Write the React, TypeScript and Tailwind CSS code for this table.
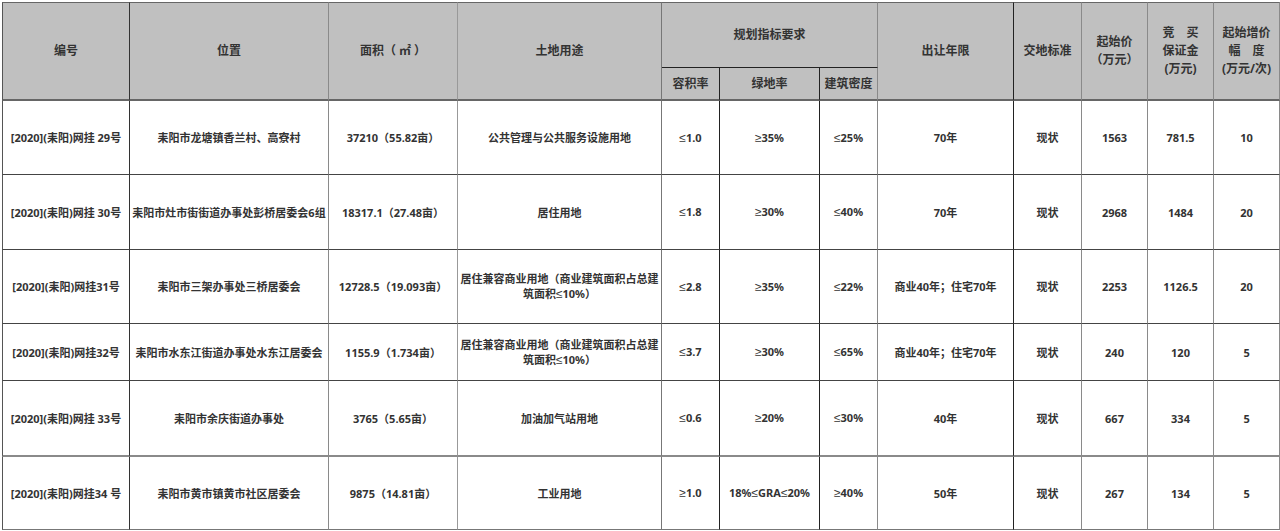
import React from "react";

type Row = {
  id: string;
  loc: string;
  area: string;
  use: string[];
  far: string;
  green: string;
  density: string;
  term: string;
  std: string;
  price: string;
  deposit: string;
  step: string;
  h: string;
  bottom: string;
};

const rows: Row[] = [
  {
    id: "[2020](耒阳)网挂 29号",
    loc: "耒阳市龙塘镇香兰村、高寮村",
    area: "37210（55.82亩）",
    use: ["公共管理与公共服务设施用地"],
    far: "≤1.0",
    green: "≥35%",
    density: "≤25%",
    term: "70年",
    std: "现状",
    price: "1563",
    deposit: "781.5",
    step: "10",
    h: "h-[74px]",
    bottom: "border-b border-b-[#444]",
  },
  {
    id: "[2020](耒阳)网挂 30号",
    loc: "耒阳市灶市街街道办事处彭桥居委会6组",
    area: "18317.1（27.48亩）",
    use: ["居住用地"],
    far: "≤1.8",
    green: "≥30%",
    density: "≤40%",
    term: "70年",
    std: "现状",
    price: "2968",
    deposit: "1484",
    step: "20",
    h: "h-[75px]",
    bottom: "border-b border-b-[#444]",
  },
  {
    id: "[2020](耒阳)网挂31号",
    loc: "耒阳市三架办事处三桥居委会",
    area: "12728.5（19.093亩）",
    use: ["居住兼容商业用地（商业建筑面积占总建", "筑面积≤10%）"],
    far: "≤2.8",
    green: "≥35%",
    density: "≤22%",
    term: "商业40年；住宅70年",
    std: "现状",
    price: "2253",
    deposit: "1126.5",
    step: "20",
    h: "h-[74px]",
    bottom: "border-b border-b-[#444]",
  },
  {
    id: "[2020](耒阳)网挂32号",
    loc: "耒阳市水东江街道办事处水东江居委会",
    area: "1155.9（1.734亩）",
    use: ["居住兼容商业用地（商业建筑面积占总建", "筑面积≤10%）"],
    far: "≤3.7",
    green: "≥30%",
    density: "≤65%",
    term: "商业40年；住宅70年",
    std: "现状",
    price: "240",
    deposit: "120",
    step: "5",
    h: "h-[57px]",
    bottom: "border-b border-b-[#444]",
  },
  {
    id: "[2020](耒阳)网挂 33号",
    loc: "耒阳市余庆街道办事处",
    area: "3765（5.65亩）",
    use: ["加油加气站用地"],
    far: "≤0.6",
    green: "≥20%",
    density: "≤30%",
    term: "40年",
    std: "现状",
    price: "667",
    deposit: "334",
    step: "5",
    h: "h-[76px]",
    bottom: "border-b-2 border-b-[#8a8a8a]",
  },
  {
    id: "[2020](耒阳)网挂34 号",
    loc: "耒阳市黄市镇黄市社区居委会",
    area: "9875（14.81亩）",
    use: ["工业用地"],
    far: "≥1.0",
    green: "18%≤GRA≤20%",
    density: "≥40%",
    term: "50年",
    std: "现状",
    price: "267",
    deposit: "134",
    step: "5",
    h: "h-[73px]",
    bottom: "border-b border-b-[#777]",
  },
];

// right border colours per column
const rb = [
  "border-r border-r-[#333]",
  "border-r border-r-[#8a8a8a]",
  "border-r border-r-[#999]",
  "border-r border-r-[#777]",
  "border-r border-r-[#222]",
  "border-r border-r-[#222]",
  "border-r border-r-[#8a8a8a]",
  "border-r border-r-[#222]",
  "border-r border-r-[#8a8a8a]",
  "border-r border-r-[#8a8a8a]",
  "border-r border-r-[#8a8a8a]",
  "border-r border-r-[#8a8a8a]",
];

const widths = [
  "w-[128px]",
  "w-[199px]",
  "w-[129px]",
  "w-[204px]",
  "w-[58px]",
  "w-[100px]",
  "w-[58px]",
  "w-[136px]",
  "w-[68px]",
  "w-[66px]",
  "w-[66px]",
  "w-[66px]",
];

function Sym({ text }: { text: string }) {
  const parts = text.split(/([≤≥])/);
  return (
    <>
      {parts.map((p, i) =>
        p === "≤" || p === "≥" ? (
          <span key={i} className="font-['Liberation_Sans'] font-normal text-[12px]">
            {p}
          </span>
        ) : (
          <React.Fragment key={i}>{p}</React.Fragment>
        )
      )}
    </>
  );
}

export default function App() {
  const th =
    "bg-[#c0c0c0] text-center align-middle font-bold text-[12px] leading-[18px] text-[#333] p-0";
  const td =
    "bg-white text-center align-middle font-bold text-[11px] leading-[15px] text-[#333] px-0 py-0 whitespace-nowrap";
  const topB = "border-t border-t-[#666] border-b-2 border-b-[#666]";
  return (
    <div
      className="w-[1280px] h-[531px] bg-white overflow-hidden pt-[2px] pl-[2px]"
      style={{ fontFamily: '"Noto Sans", "Noto Sans CJK SC", sans-serif' }}
    >
      <table className="table-fixed border-separate border-spacing-0 w-[1278px]">
        <colgroup>
          {widths.map((w, i) => (
            <col key={i} className={w} />
          ))}
        </colgroup>
        <thead>
          <tr className="h-[66px]">
            <th rowSpan={2} className={`${th} border-l border-l-[#555] ${topB} ${rb[0]}`}>
              编号
            </th>
            <th rowSpan={2} className={`${th} ${topB} ${rb[1]}`}>
              位置
            </th>
            <th rowSpan={2} className={`${th} ${topB} ${rb[2]}`}>
              面积（ ㎡ ）
            </th>
            <th rowSpan={2} className={`${th} ${topB} ${rb[3]}`}>
              土地用途
            </th>
            <th
              colSpan={3}
              className={`${th} border-t border-t-[#666] border-b border-b-[#222] border-r border-r-[#8a8a8a]`}
            >
              规划指标要求
            </th>
            <th rowSpan={2} className={`${th} ${topB} ${rb[7]}`}>
              出让年限
            </th>
            <th rowSpan={2} className={`${th} ${topB} ${rb[8]}`}>
              交地标准
            </th>
            <th rowSpan={2} className={`${th} ${topB} ${rb[9]}`}>
              起始价
              <br />
              （万元）
            </th>
            <th rowSpan={2} className={`${th} ${topB} ${rb[10]}`}>
              竞　买
              <br />
              保证金
              <br />
              (万元)
            </th>
            <th rowSpan={2} className={`${th} ${topB} ${rb[11]}`}>
              起始增价
              <br />
              幅　度
              <br />
              (万元/次)
            </th>
          </tr>
          <tr className="h-[33px]">
            <th className={`${th} border-b-2 border-b-[#666] ${rb[4]}`}>容积率</th>
            <th className={`${th} border-b-2 border-b-[#666] ${rb[5]}`}>绿地率</th>
            <th className={`${th} border-b-2 border-b-[#666] ${rb[6]}`}>建筑密度</th>
          </tr>
        </thead>
        <tbody>
          {rows.map((r, i) => {
            const cells: React.ReactNode[] = [
              r.id,
              r.loc,
              r.area,
              r.use.map((l, k) => (
                <React.Fragment key={k}>
                  {k > 0 && <br />}
                  <Sym text={l} />
                </React.Fragment>
              )),
              <Sym text={r.far} />,
              <Sym text={r.green} />,
              <Sym text={r.density} />,
              r.term,
              r.std,
              r.price,
              r.deposit,
              r.step,
            ];
            return (
              <tr key={i} className={r.h}>
                {cells.map((c, j) => (
                  <td
                    key={j}
                    className={`${td} ${r.bottom} ${rb[j]} ${
                      j === 0 ? "border-l border-l-[#555]" : ""
                    }`}
                  >
                    {c}
                  </td>
                ))}
              </tr>
            );
          })}
        </tbody>
      </table>
    </div>
  );
}
